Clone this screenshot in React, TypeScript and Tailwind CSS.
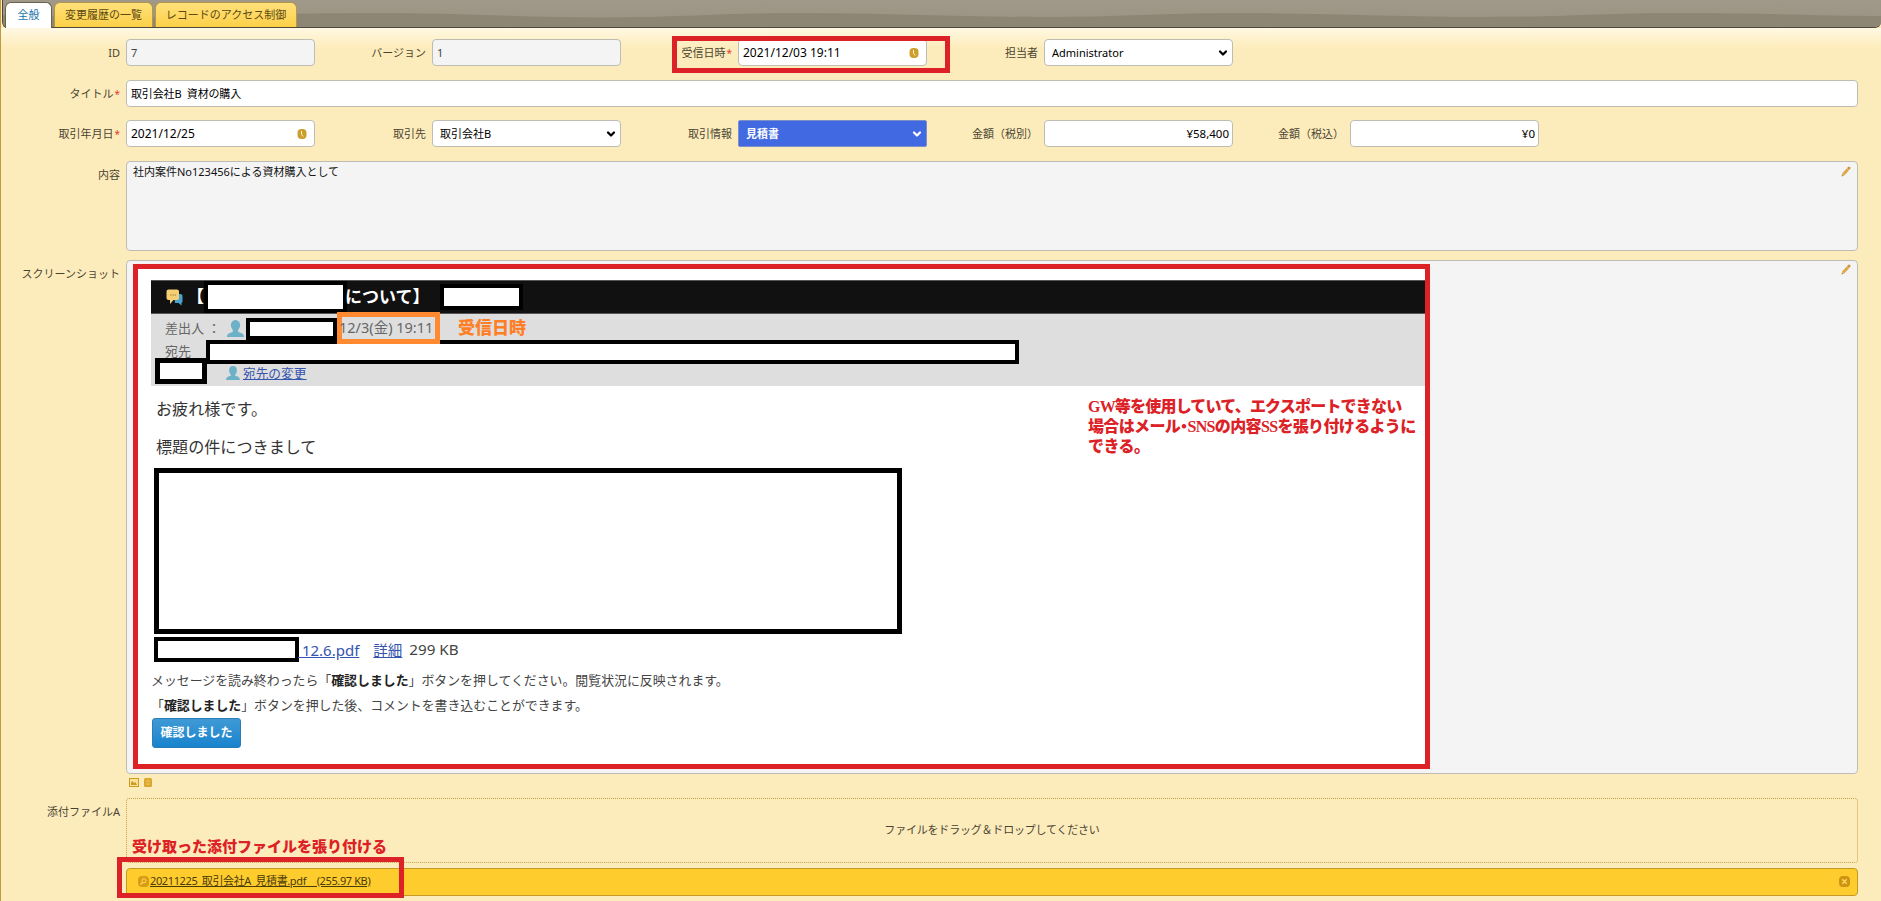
import React from 'react';
import { ChevronDown } from 'lucide-react';

const labelClass = 'shrink-0 w-[121px] pr-1.5 text-right text-[#4a4433] whitespace-nowrap';

function Required() {
    return <span className="ml-px text-[#e04030] text-[10px]">*</span>;
}

function ClockIcon() {
    return (
        <svg width="10" height="10" viewBox="0 0 10 10" className="mr-[7px]">
            <rect x="0.5" y="0" width="9" height="10" rx="4" fill="#cc9f2c" />
            <path d="M4.5 2v3.200l1.700 2.300" stroke="#fff3c8" strokeWidth="1" fill="none" />
        </svg>
    );
}

function PencilIcon() {
    return (
        <svg width="10" height="11" viewBox="0 0 10 11">
            <path d="M2.200 8.600L6.800 3.400" stroke="#dba94c" strokeWidth="3" />
            <path d="M7.800 2.200L8 2" stroke="#cd9636" strokeWidth="3" strokeLinecap="round" />
            <path d="M0.600 10.600l0.400-2.600 2 1.800z" fill="#c08c2c" />
        </svg>
    );
}

function PersonIcon({ size }: { size: number }) {
    return (
        <svg width={size} height={size} viewBox="0 0 16 16">
            <ellipse cx="8" cy="5" rx="4.400" ry="5" fill="#6db1c9" />
            <path d="M0 16c0-3.500 3-4 5.400-4.800V8h5.200v3.200C13 12 16 12.500 16 16z" fill="#6db1c9" />
        </svg>
    );
}

function ChatIcon() {
    return (
        <svg width="17" height="17" viewBox="0 0 17 17">
            <path d="M8 5h6.500a2 2 0 0 1 2 2v5a2 2 0 0 1-1 2v2.500l-3-2.500H9z" fill="#4aa3cf" />
            <path d="M2.500 0.500h8.500a2 2 0 0 1 2 2v6.500a2 2 0 0 1-2 2H7.500L4 15V11H2.500a2 2 0 0 1-2-2V2.500a2 2 0 0 1 2-2z" fill="#f5cf73" />
            <path d="M4 6h1.500M6.300 6H7.800M8.600 6h1.500" stroke="#a8843a" strokeWidth="1" />
        </svg>
    );
}

type FieldProps = {
    label: string;
    value: string;
    required?: boolean;
    kind?: 'readonly' | 'date' | 'select' | 'highlight' | 'money' | 'text';
};

function Field({ label, value, required, kind = 'text' }: FieldProps) {
    const isSelect = kind === 'select' || kind === 'highlight';
    let box = 'bg-white border-[#bdbdb5] rounded-[4px] text-black pl-1';
    if (kind === 'readonly') box = 'bg-[#f4f4f4] border-[#bdbdb5] rounded-[4px] text-[#444] pl-1';
    if (kind === 'select') box = 'bg-white border-[#bdbdb5] rounded-[4px] text-black pl-[7px]';
    if (kind === 'highlight') box = 'bg-[#4169e1] border-[#7d8fc8] rounded-[2px] text-white font-bold pl-[7px]';
    if (kind === 'money') box = 'bg-white border-[#bdbdb5] rounded-[4px] text-black justify-end pr-[3px] text-[11.500px]';

    return (
        <div className="flex w-[306px] h-[27px] items-center">
            <div className="w-[117px] pr-1.5 text-right text-[#4a4433] whitespace-nowrap">
                {label}
                {required && <Required />}
            </div>
            <div className={`flex w-[189px] h-[27px] items-center border ${box}`}>
                <span className={kind === 'date' ? 'flex-1 text-[12px]' : isSelect ? 'flex-1' : ''}>{value}</span>
                {kind === 'date' && <ClockIcon />}
                {isSelect && <ChevronDown className="w-3 h-3 mr-[3px]" strokeWidth={4.5} />}
            </div>
        </div>
    );
}

function TabBar() {
    return (
        <div className="relative ml-px flex h-[28px] shrink-0 items-end gap-[2px] pl-[2px] rounded-b-[6px] border-b border-l border-[#50493a] bg-gradient-to-b from-[#a09889] to-[#9a9282]">
            <svg className="absolute inset-0 rounded-b-[5px]" width="1878" height="27" viewBox="0 0 1878 27">
                <path
                    d="M0 15C60 17 130 18 180 17C260 15 300 13 370 13C450 13 520 17 600 17.500C680 17.500 720 13 800 13C880 13 960 17 1040 17C1120 17 1160 13 1235 13C1320 13 1400 17 1480 17C1560 17 1600 13 1675 13C1760 13 1820 16 1881 16V28H0Z"
                    fill="#8e8674"
                />
            </svg>
            <div className="relative -mb-px flex h-[26px] w-[47px] items-center justify-center rounded-t-[6px] border border-b-0 border-[#6b624c] bg-white pb-[2px] text-[#1a73a8]">全般</div>
            <div className="relative flex h-[25px] w-[99px] items-center justify-center rounded-t-[6px] border border-b-0 border-[#b3984a] bg-gradient-to-b from-[#ffe07a] to-[#fdd045] pb-px text-[#5c4a10]">変更履歴の一覧</div>
            <div className="relative flex h-[25px] w-[142px] items-center justify-center rounded-t-[6px] border border-b-0 border-[#b3984a] bg-gradient-to-b from-[#ffe07a] to-[#fdd045] pb-px text-[#5c4a10]">レコードのアクセス制御</div>
        </div>
    );
}

function MailCapture() {
    return (
        <div className="relative ml-[6px] mt-[3px] h-[505px] w-[1297px] border-[5px] border-[#dc2127] bg-white pl-[13px] pt-[11px] text-[13px] text-[#666]">
            <div className="flex h-[34px] items-center border-y border-[#555] bg-[#111] pl-[15px] text-[17px] font-bold text-white">
                <ChatIcon />
                <span className="w-[21px] pb-[2px] text-right">【</span>
                <div className="mb-px h-[32px] w-[143px] border-4 border-black bg-white" />
                <span className="-ml-[2px] w-[95px] pb-[2px] whitespace-nowrap">について】</span>
                <div className="h-[26px] w-[83px] border-4 border-black bg-white" />
            </div>
            <div className="h-[72px] bg-[#dedede]">
                <div className="flex h-[29px] items-center pl-[14px]">
                    <span className="w-[62px] pb-px whitespace-pre">差出人 ：</span>
                    <PersonIcon size={17} />
                    <div className="ml-[2px] h-[22px] w-[91px] border-4 border-black bg-white" />
                    <div className="relative -mt-[2px] flex h-[32px] w-[103px] items-center whitespace-nowrap border-[5px] border-[#ff8a30] text-[14.500px]">
                        <span className="-ml-[3px]">12/3(金) 19:11</span>
                    </div>
                    <span className="ml-[18px] pb-[2px] text-[17px] font-black text-[#ff7f27]">受信日時</span>
                </div>
                <div className="-mt-[3px] flex h-[24px] items-center pl-[14px]">
                    <span className="w-[41px] pb-[2px]">宛先</span>
                    <div className="h-[24px] w-[813px] border-4 border-black bg-white" />
                </div>
                <div className="-mt-[6px] flex h-[26px] items-start pl-[4px]">
                    <div className="h-[26px] w-[52px] border-[5px] border-black bg-white" />
                    <div className="ml-[19px] mt-[5px] flex h-[20px] items-center gap-[3px]">
                        <PersonIcon size={14} />
                        <span className="text-[12.700px] text-[#3554b0] underline">宛先の変更</span>
                    </div>
                </div>
            </div>
            <div className="flex justify-between pl-[5px] pr-[7px] text-[#333]">
                <div className="text-[16.100px] leading-[38px] pt-[4px] -mb-px">
                    <p>お疲れ様です。</p>
                    <p>標題の件につきまして</p>
                </div>
                <div className="w-[330px] pt-[11px] font-['Liberation_Serif','Noto_Sans_CJK_JP',serif] text-[16px] font-black leading-[20px] whitespace-nowrap text-[#dc2127]">
                    <p className="tracking-[-0.8px]">GW等を使用していて、エクスポートできない</p>
                    <p className="tracking-[-0.650px]">場合はメール<span className="[font-feature-settings:'halt']">・</span>SNSの内容SSを張り付けるように</p>
                    <p className="tracking-[-0.600px]">できる。</p>
                </div>
            </div>
            <div className="ml-[3px] mt-[3px] h-[166px] w-[748px] border-[5px] border-black bg-white" />
            <div className="ml-[3px] mt-[3px] flex h-[25px] items-center text-[15px] text-[#444]">
                <div className="h-[25px] w-[145px] border-4 border-black bg-white" />
                <span className="-ml-px pt-px text-[#3554b0] underline">&nbsp;12.6.pdf</span>
                <span className="ml-[14px] pt-px text-[14.500px] text-[#3554b0] underline">詳細</span>
                <span className="ml-[7px] pt-px text-[15.200px]">299 KB</span>
            </div>
            <div className="pt-[6px] pb-px text-[12.900px] leading-[24.500px] text-[#444]">
                <p>メッセージを読み終わったら「<b className="text-[#222]">確認しました</b>」ボタンを押してください。閲覧状況に反映されます。</p>
                <p>「<b className="text-[#222]">確認しました</b>」ボタンを押した後、コメントを書き込むことができます。</p>
            </div>
            <button className="ml-px flex h-[30px] w-[89px] items-center justify-center rounded-[3px] border border-[#2a7db5] bg-gradient-to-b from-[#3f9ad6] to-[#1583cd] text-[12px] font-bold text-white">確認しました</button>
        </div>
    );
}

export default function App() {
    return (
        <div className="relative flex h-[901px] w-[1881px] flex-col overflow-hidden border-l border-[#c09a3c] bg-[#fdecb9] font-['Noto_Sans','Noto_Sans_CJK_JP',sans-serif] text-[11px] leading-none">
            <TabBar />
            <div className="flex flex-1 flex-col bg-[linear-gradient(to_bottom,#fff8e2_0px,#fdecbb_20px)] pl-[4px] pr-[23px] pt-[11px]">
                <div className="ml-[4px] flex">
                    <Field label="ID" value="7" kind="readonly" />
                    <Field label="バージョン" value="1" kind="readonly" />
                    <Field label="受信日時" value="2021/12/03 19:11" kind="date" required />
                    <Field label="担当者" value="Administrator" kind="select" />
                </div>
                <div className="mt-[14px] flex items-center">
                    <div className={labelClass}>タイトル<Required /></div>
                    <div className="flex h-[27px] flex-1 items-center whitespace-pre rounded-[4px] border border-[#bdbdb5] bg-white pl-1 tracking-[-0.150px] text-black">取引会社B  資材の購入</div>
                </div>
                <div className="ml-[4px] mt-[13px] flex">
                    <Field label="取引年月日" value="2021/12/25" kind="date" required />
                    <Field label="取引先" value="取引会社B" kind="select" />
                    <Field label="取引情報" value="見積書" kind="highlight" />
                    <Field label="金額（税別）" value="¥58,400" kind="money" />
                    <Field label="金額（税込）" value="¥0" kind="money" />
                </div>
                <div className="mt-[14px] flex">
                    <div className={`${labelClass} pt-[8px]`}>内容</div>
                    <div className="flex h-[90px] flex-1 justify-between rounded-[4px] border border-[#bdbdb5] bg-[#f4f4f4] pl-[6px] pr-[6px] pt-[4px] text-[#111]">
                        <span>社内案件No123456による資材購入として</span>
                        <PencilIcon />
                    </div>
                </div>
                <div className="mt-[9px] flex">
                    <div className={`${labelClass} pt-[8px]`}>スクリーンショット</div>
                    <div className="flex h-[514px] flex-1 justify-between rounded-[4px] border border-[#bdbdb5] bg-[#f4f4f4] pr-[6px]">
                        <MailCapture />
                        <div className="pt-[3px]"><PencilIcon /></div>
                    </div>
                </div>
                <div className="ml-[124px] flex h-[24px] shrink-0 gap-[5px] pt-[4px]">
                    <svg width="10" height="9" viewBox="0 0 10 9">
                        <rect x="0.5" y="0.5" width="9" height="8" fill="#fbe39a" stroke="#cf9c20" />
                        <path d="M2 7V4.500L3.500 3L5 5L6.500 4L8 7z" fill="#cf9c20" />
                    </svg>
                    <svg width="9" height="9" viewBox="0 0 9 9">
                        <rect width="8" height="9" rx="1.500" fill="#d9a62c" />
                        <path d="M1 3h6M1 6h6M4 1v7" stroke="#f0cd70" strokeWidth="0.6" />
                    </svg>
                </div>
                <div className="flex">
                    <div className={`${labelClass} pt-[8px]`}>添付ファイルA</div>
                    <div className="flex-1">
                        <div className="flex h-[65px] items-center justify-center rounded-[3px] border border-dotted border-[#c9a040] pb-[2px] tracking-[-0.200px] text-[#4a4433]">
                            ファイルをドラッグ＆ドロップしてください
                        </div>
                        <div className="mt-[5px] flex h-[28px] items-center rounded-[4px] border border-[#c49a25] bg-[#ffcc2e] pb-px pl-[11px] pr-[7px] text-[#4a3b08]">
                            <svg width="11" height="11" viewBox="0 0 11 11">
                                <rect width="11" height="11" rx="4" fill="#d89e12" />
                                <circle cx="6" cy="4.800" r="2" fill="none" stroke="#ffd95e" />
                                <path d="M4.500 6.500L2.500 8.500" stroke="#ffd95e" strokeWidth="1.200" />
                            </svg>
                            <span className="ml-px flex-1 pb-[2px] tracking-[-0.380px] underline">20211225_取引会社A_見積書.pdf　(255.97 KB)</span>
                            <svg width="11" height="11" viewBox="0 0 11 11">
                                <rect width="11" height="11" rx="4" fill="#cf9512" />
                                <path d="M3.300 3.300l4.400 4.400M7.700 3.300l-4.400 4.400" stroke="#ffd95e" strokeWidth="1.500" />
                            </svg>
                        </div>
                    </div>
                </div>
            </div>

            {/* annotations */}
            <div className="absolute left-[671px] top-[36px] h-[37px] w-[278px] border-[5px] border-[#dc2127]" />
            <div className="absolute left-[131px] top-[837px] whitespace-nowrap text-[15px] font-black leading-[18px] text-[#dc2127]">受け取った添付ファイルを張り付ける</div>
            <div className="absolute left-[116px] top-[857px] h-[41px] w-[287px] border-[5px] border-[#dc2127]" />
        </div>
    );
}
